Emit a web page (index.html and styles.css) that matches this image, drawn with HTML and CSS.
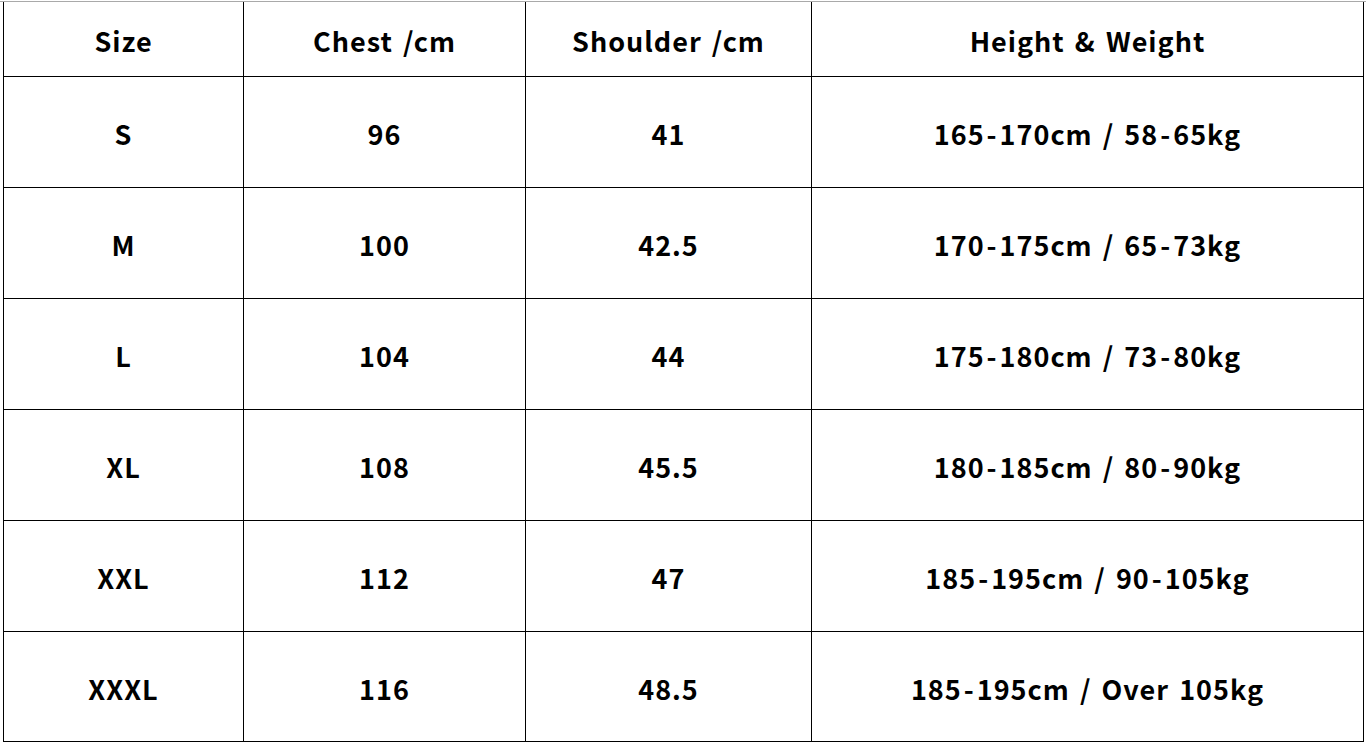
FILE: index.html
```html
<!DOCTYPE html>
<html>
<head>
<meta charset="utf-8">
<link rel="stylesheet" href="styles.css">
</head>
<body>
<div class="topline"></div>
<div class="chart">
  <div class="cell head">Size</div>
  <div class="cell head">Chest /cm</div>
  <div class="cell head">Shoulder /cm</div>
  <div class="cell head">Height &amp; Weight</div>

  <div class="cell">S</div>
  <div class="cell">96</div>
  <div class="cell">41</div>
  <div class="cell">165<span class="dash">-</span>170cm / 58<span class="dash">-</span>65kg</div>

  <div class="cell">M</div>
  <div class="cell">100</div>
  <div class="cell">42.5</div>
  <div class="cell">170<span class="dash">-</span>175cm / 65<span class="dash">-</span>73kg</div>

  <div class="cell">L</div>
  <div class="cell">104</div>
  <div class="cell">44</div>
  <div class="cell">175<span class="dash">-</span>180cm / 73<span class="dash">-</span>80kg</div>

  <div class="cell">XL</div>
  <div class="cell">108</div>
  <div class="cell">45.5</div>
  <div class="cell">180<span class="dash">-</span>185cm / 80<span class="dash">-</span>90kg</div>

  <div class="cell">XXL</div>
  <div class="cell">112</div>
  <div class="cell">47</div>
  <div class="cell">185<span class="dash">-</span>195cm / 90<span class="dash">-</span>105kg</div>

  <div class="cell last">XXXL</div>
  <div class="cell last">116</div>
  <div class="cell last">48.5</div>
  <div class="cell last">185<span class="dash">-</span>195cm / Over 105kg</div>
</div>
</body>
</html>
```
FILE: styles.css
```css
html, body {
  margin: 0;
  padding: 0;
  background: #ffffff;
}
body {
  width: 1366px;
  height: 743px;
  overflow: hidden;
  font-family: "Noto Sans CJK SC", "Noto Sans", sans-serif;
  font-weight: 700;
  color: #000000;
}
.topline {
  margin-top: 1px;
  height: 1px;
  background: #a9a9a9;
}
.chart {
  margin-left: 3px;
  width: 1360px;
  border-left: 1px solid #000;
  display: grid;
  grid-template-columns: 240px 282px 286px 552px;
  grid-template-rows: 75px repeat(5, 111px) 110px;
}
.cell {
  border-right: 1px solid #000;
  border-bottom: 1px solid #000;
  display: flex;
  align-items: center;
  justify-content: center;
  white-space: pre;
  font-size: 27px;
  letter-spacing: 1px;
  word-spacing: 3px;
  padding-top: 3px;
  box-sizing: border-box;
}
.head {
  padding-top: 2px;
}
.dash {
  margin: 0 2px;
}
```
